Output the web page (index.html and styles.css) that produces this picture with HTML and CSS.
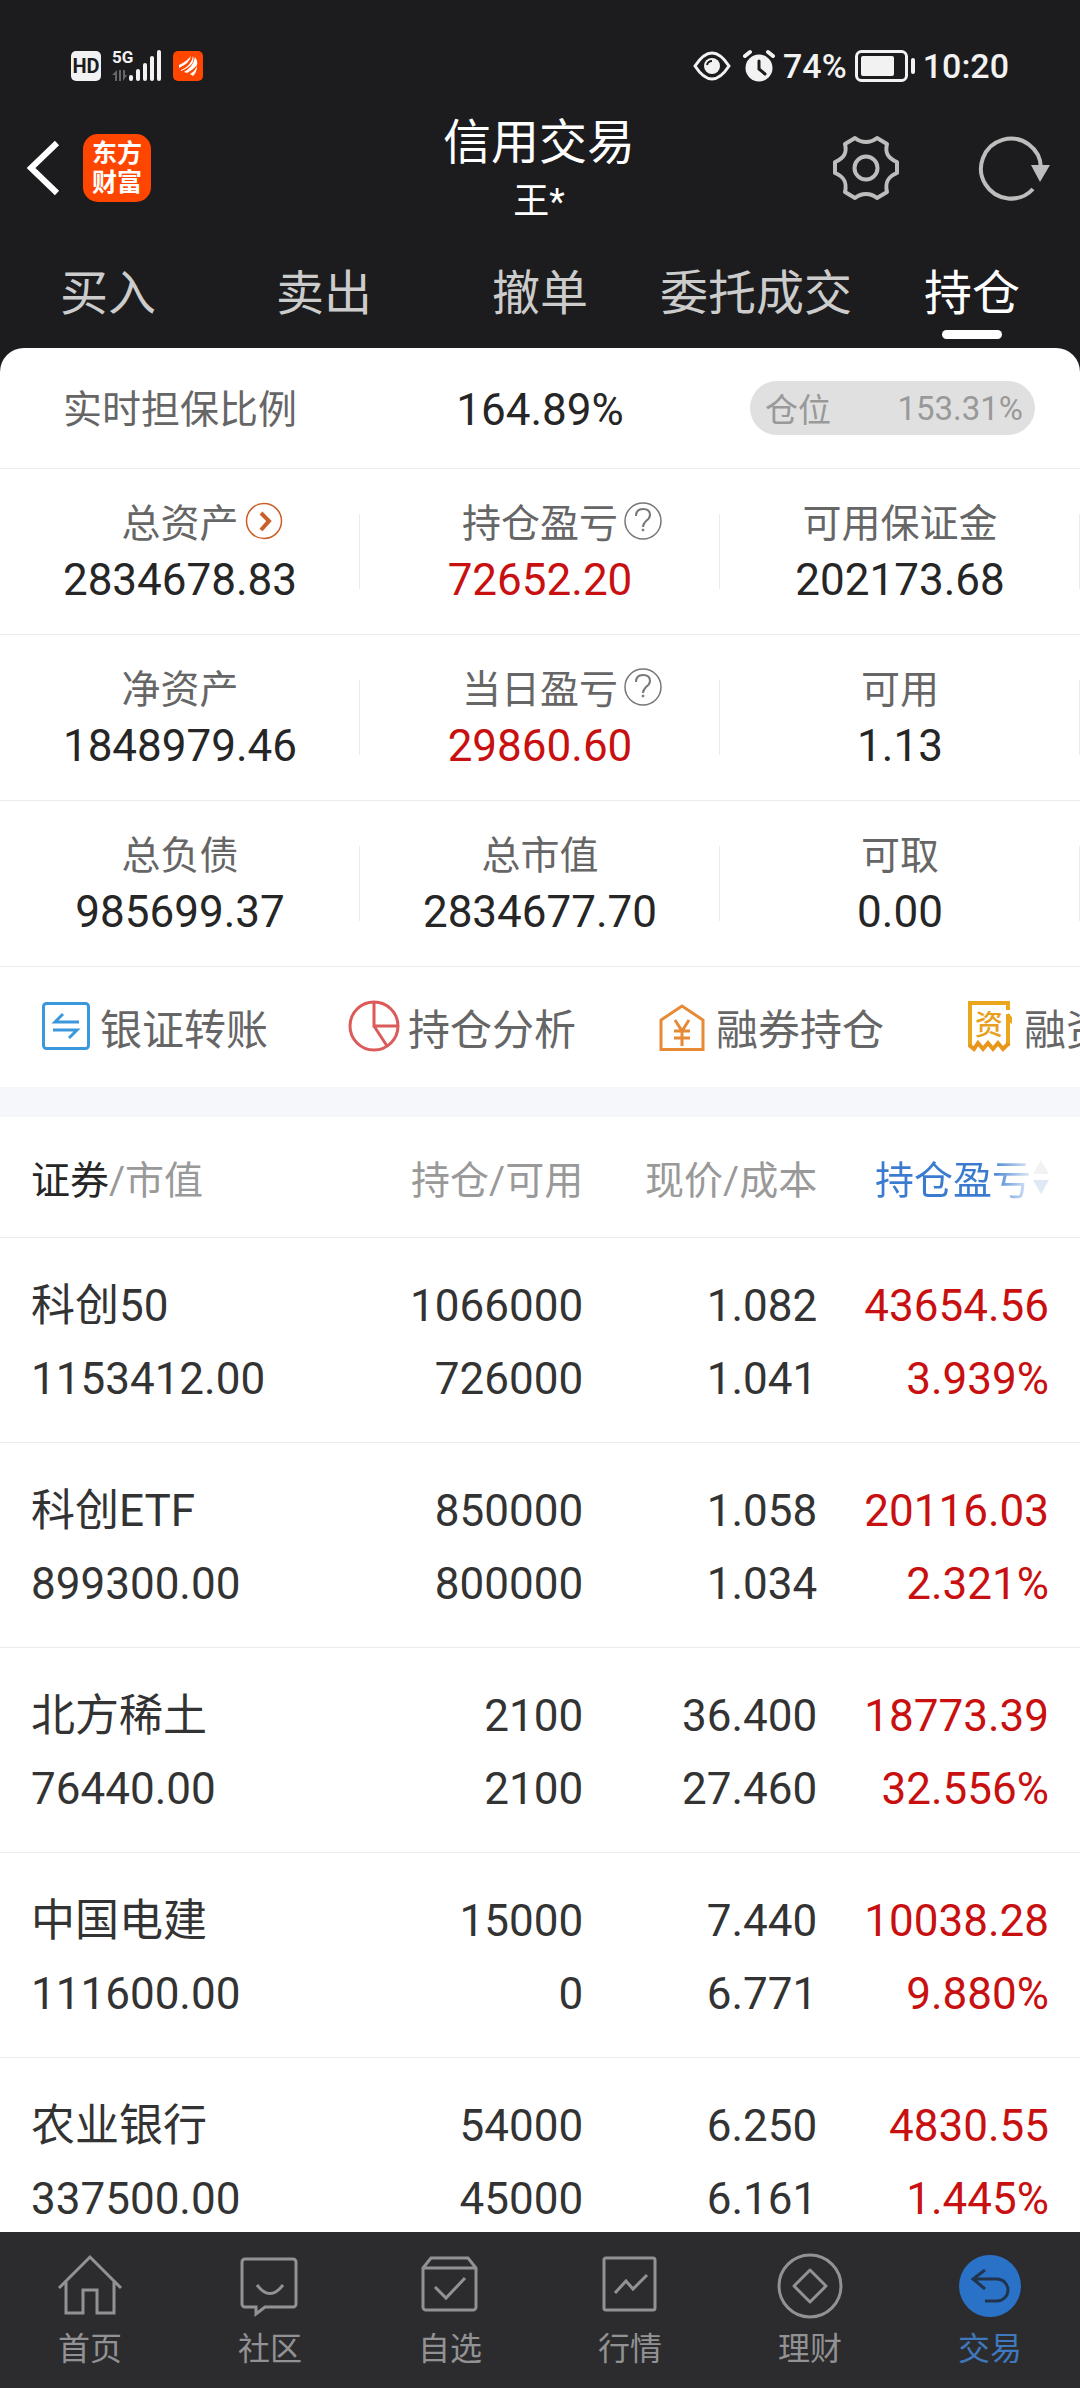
FILE: index.html
```html
<!DOCTYPE html>
<html lang="zh-CN">
<head>
<meta charset="utf-8">
<meta name="viewport" content="width=device-width, initial-scale=1">
<title>信用交易</title>
<link rel="stylesheet" href="styles.css">
</head>
<body>
<div class="app">
  <div class="status">
    <div class="status-group">
      <svg class="hd" width="30" height="30" viewBox="0 0 30 30"><rect width="30" height="30" rx="5" fill="#f2f2f2"/><text x="15" y="22" text-anchor="middle" font-size="20" font-weight="700" fill="#1c1c1e">HD</text></svg>
      <svg class="signal" width="50" height="32" viewBox="0 0 50 32"><text x="0" y="13" font-size="17" font-weight="700" fill="#f2f2f2">5G</text><g fill="#666"><path d="M0 25l5-5v11H3v-6zM7 20h2v11H7zM11 20v11l4-6h-2v-5z"/></g><g fill="#f2f2f2"><rect x="17" y="25" width="4" height="6" rx="2"/><rect x="24" y="19" width="4" height="12" rx="2"/><rect x="31" y="13" width="4" height="18" rx="2"/><rect x="38" y="6" width="4" height="25" rx="2"/><rect x="45" y="0" width="4" height="31" rx="2"/></g></svg>
      <svg width="30" height="30" viewBox="0 0 30 30"><rect width="30" height="30" rx="5" fill="#ff4600"/><path fill="#fff" d="M6 14Q13 11 18 5Q17 12 6 17zM8 19Q18 15 20 5Q23 14 8 20zM11 21Q20 16 22 6Q25 10 24 14Q21 18 14 22zM17 23Q22 20 24 15Q24 21 20 25z"/></svg>
    </div>
    <div class="status-group status-right">
      <svg width="38" height="30" viewBox="0 0 38 30"><path d="M2 15Q19-11 36 15Q19 41 2 15z" fill="none" stroke="#f2f2f2" stroke-width="3"/><circle cx="19" cy="15" r="8" fill="#f2f2f2"/><path d="M14 14q1-4 5-4" stroke="#1c1c1e" stroke-width="2" fill="none"/></svg>
      <svg class="alarm" width="32" height="32" viewBox="0 0 32 32"><circle cx="16" cy="18" r="13.500" fill="#f2f2f2"/><path d="M2 6l5-4M30 6l-5-4" stroke="#f2f2f2" stroke-width="4" stroke-linecap="round"/><path d="M16 11v8l6 5" fill="none" stroke="#1c1c1e" stroke-width="3" stroke-linecap="round"/></svg>
      <span>74%</span>
      <svg class="battery" width="60" height="32" viewBox="0 0 60 32"><rect x="1.500" y="1.500" width="50" height="29" rx="5" fill="none" stroke="#f2f2f2" stroke-width="3"/><rect x="6" y="6" width="33" height="20" rx="2" fill="#f2f2f2"/><rect x="56" y="8" width="4" height="16" rx="2" fill="#f2f2f2"/></svg>
      <span>10:20</span>
    </div>
  </div>

  <header class="header">
    <div class="header-side">
      <button class="icon-btn" aria-label="返回"><svg width="32" height="56" viewBox="0 0 32 56"><path d="M30 3L4 28L30 53" fill="none" stroke="#fff" stroke-width="6"/></svg></button>
      <div class="logo"><span>东方</span><span>财富</span></div>
    </div>
    <div class="heading"><h1>信用交易</h1><p>王*</p></div>
    <div class="header-side header-tools">
      <button class="icon-btn" aria-label="设置"><svg width="68" height="66" viewBox="0 0 68 66"><g fill="none" stroke="#bdbdbd" stroke-width="4" stroke-linejoin="round"><path d="M23 3Q28 7 34 7T45 3L55 9C53 17 55 23 65 27V38C55 42 53 48 55 57L45 63Q40 59 34 59T23 63L13 57C15 48 13 42 3 38V27C13 23 15 17 13 9z"/><circle cx="34" cy="33" r="11.500"/></g></svg></button>
      <button class="icon-btn" aria-label="刷新"><svg width="72" height="66" viewBox="0 0 72 66"><path d="M54 54A30 30 0 1 1 62 33" fill="none" stroke="#bdbdbd" stroke-width="4"/><path d="M52 30h19l-10 17z" fill="#bdbdbd"/></svg></button>
    </div>
  </header>

  <nav class="tabs">
    <a href="#buy">买入</a><a href="#sell">卖出</a><a href="#cancel">撤单</a><a href="#orders">委托成交</a><a href="#positions" class="active">持仓</a>
  </nav>

  <main class="panel">
    <section class="ratio">
      <span class="label">实时担保比例</span>
      <span class="value">164.89%</span>
      <div class="pill"><span>仓位</span><span>153.31%</span></div>
    </section>
    <section class="stats">
      <div class="stat"><span class="label">总资产<a class="hint" href="#assets" aria-label="总资产详情"><svg width="38" height="38" viewBox="0 0 38 38" fill="none" stroke="#c8602a"><circle cx="19" cy="19" r="17.500" stroke-width="1.500"/><path d="M16 11l8 8-8 9" stroke-width="4"/></svg></a></span><span class="value">2834678.83</span></div>
      <div class="stat"><span class="label">持仓盈亏<button class="hint" aria-label="持仓盈亏说明"><svg width="38" height="38" viewBox="0 0 38 38" fill="none" stroke="#777"><circle cx="19" cy="19" r="18" stroke-width="1.500"/><path d="M12 14q0-7 7-7t7 6q0 3-4 6q-3 3-3 6" stroke-width="2"/><circle cx="19" cy="28" r="1" fill="#777"/></svg></button></span><span class="value red">72652.20</span></div>
      <div class="stat"><span class="label">可用保证金</span><span class="value">202173.68</span></div>
      <div class="stat"><span class="label">净资产</span><span class="value">1848979.46</span></div>
      <div class="stat"><span class="label">当日盈亏<button class="hint" aria-label="当日盈亏说明"><svg width="38" height="38" viewBox="0 0 38 38" fill="none" stroke="#777"><circle cx="19" cy="19" r="18" stroke-width="1.500"/><path d="M12 14q0-7 7-7t7 6q0 3-4 6q-3 3-3 6" stroke-width="2"/><circle cx="19" cy="28" r="1" fill="#777"/></svg></button></span><span class="value red">29860.60</span></div>
      <div class="stat"><span class="label">可用</span><span class="value">1.13</span></div>
      <div class="stat"><span class="label">总负债</span><span class="value">985699.37</span></div>
      <div class="stat"><span class="label">总市值</span><span class="value">2834677.70</span></div>
      <div class="stat"><span class="label">可取</span><span class="value">0.00</span></div>
    </section>
    <nav class="shortcuts">
      <a href="#transfer"><svg width="52" height="52" viewBox="0 0 52 52" fill="none" stroke="#3b98dc" stroke-width="3"><rect x="3.500" y="3.500" width="45" height="45" rx="3"/><path d="M39 22H15l8-8M13 30h24l-8 8" stroke-width="3"/></svg>银证转账</a>
      <a href="#analysis"><svg width="52" height="52" viewBox="0 0 52 52" fill="none" stroke="#dc5a5a" stroke-width="3"><circle cx="26" cy="26" r="24"/><path d="M26 2v24h24M26 26l13 20"/></svg>持仓分析</a>
      <a href="#short"><svg width="52" height="52" viewBox="0 0 52 52" fill="none" stroke="#e68a35" stroke-width="3"><path d="M5 49.500V20L26 6l21 14v29.500z"/><path d="M19 20l7 11 7-11M26 31v15M18 31h16M18 38h16"/></svg>融券持仓</a>
      <a href="#margin"><svg width="52" height="52" viewBox="0 0 52 52"><path d="M6 46V3h38v7M44 14v32" fill="none" stroke="#eaa61d" stroke-width="4"/><path d="M44 13l4 4v7l-4-3z" fill="#eaa61d"/><path d="M5 45l5 4 4-6 5 6 5-6 5 6 5-6 5 6 6-6" fill="none" stroke="#e8961c" stroke-width="4"/><text x="25" y="35" text-anchor="middle" font-size="28" font-weight="500" fill="#e8a01c">资</text></svg>融资持仓</a>
    </nav>
    <table class="holdings">
      <thead><tr>
        <th><b>证券</b>/市值</th><th>持仓/可用</th><th>现价/成本</th>
        <th><button class="sort"><span>持仓盈亏</span><svg width="16" height="34" viewBox="0 0 16 34"><path d="M8 0l8 14H0z" fill="#f2f2f2"/><path d="M8 34L0 20h16z" fill="#dfe8f5"/></svg></button></th>
      </tr></thead>
      <tbody>
        <tr><td>科创50<br>1153412.00</td><td>1066000<br>726000</td><td>1.082<br>1.041</td><td>43654.56<br>3.939%</td></tr>
        <tr><td>科创ETF<br>899300.00</td><td>850000<br>800000</td><td>1.058<br>1.034</td><td>20116.03<br>2.321%</td></tr>
        <tr><td>北方稀土<br>76440.00</td><td>2100<br>2100</td><td>36.400<br>27.460</td><td>18773.39<br>32.556%</td></tr>
        <tr><td>中国电建<br>111600.00</td><td>15000<br>0</td><td>7.440<br>6.771</td><td>10038.28<br>9.880%</td></tr>
        <tr><td>农业银行<br>337500.00</td><td>54000<br>45000</td><td>6.250<br>6.161</td><td>4830.55<br>1.445%</td></tr>
      </tbody>
    </table>
  </main>

  <nav class="bottom">
    <a href="#home"><svg width="66" height="66" viewBox="0 0 66 66"><path d="M2 35L33 4l31 31M9 29v31h17V37h14v23h17V29"/></svg>首页</a>
    <a href="#community"><svg width="66" height="66" viewBox="0 0 66 66"><path d="M8 6h48a3 3 0 0 1 3 3v42a3 3 0 0 1-3 3H28l-9 7v-7H8a3 3 0 0 1-3-3V9a3 3 0 0 1 3-3zM20 32q13 17 26 0"/></svg>社区</a>
    <a href="#watch"><svg width="66" height="66" viewBox="0 0 66 66"><path d="M6 15l8-10h37l8 10v39a3 3 0 0 1-3 3H9a3 3 0 0 1-3-3zM6 15h53M18 34l11 11 19-20"/></svg>自选</a>
    <a href="#quotes"><svg width="66" height="66" viewBox="0 0 66 66"><rect x="7" y="5" width="51" height="52" rx="2"/><path d="M18 40l11-12 7 8 14-14"/></svg>行情</a>
    <a href="#wealth"><svg width="66" height="66" viewBox="0 0 66 66"><circle cx="33" cy="33" r="31"/><path d="M33 17l16 16-16 16-16-16z" stroke-linejoin="round"/></svg>理财</a>
    <a href="#trade" class="active"><svg width="66" height="66" viewBox="0 0 66 66"><circle class="disc" cx="33" cy="33" r="31"/><path class="arrow" d="M28 17L16 26l12 10M16 26h24a11 11 0 0 1 0 22H28"/></svg>交易</a>
  </nav>
</div>
</body>
</html>
```
FILE: styles.css
```css
* { box-sizing: border-box; }
body {
  margin: 0;
  background: #1c1c1e;
  color: #262626;
  font-family: Roboto, "Noto Sans CJK SC", sans-serif;
}
a { color: inherit; text-decoration: none; }
button { border: 0; padding: 0; background: none; font: inherit; color: inherit; }
svg { display: block; flex: none; overflow: visible; }
.app { display: flex; flex-direction: column; height: 100vh; }

.status {
  display: flex;
  justify-content: space-between;
  align-items: center;
  height: 108px;
  padding: 24px 71px 0;
  color: #f2f2f2;
  font-size: 34px;
  font-weight: 500;
}
.status-group { display: flex; align-items: center; gap: 11px; }
.status-right { gap: 8px; }
.alarm { margin-left: 4px; }

.header {
  display: grid;
  grid-template-columns: 1fr auto 1fr;
  align-items: center;
  height: 136px;
  padding: 0 29px 16px 27px;
  color: #fff;
}
.header-side { display: flex; align-items: center; gap: 24px; }
.header-tools { justify-content: flex-end; gap: 79px; }
.logo {
  display: flex;
  flex-direction: column;
  justify-content: center;
  width: 68px;
  height: 68px;
  border-radius: 15px;
  background: #ff4600;
  text-align: center;
  font-size: 25px;
  line-height: 29px;
  font-weight: 700;
}
.heading { padding-top: 2px; text-align: center; }
.heading h1 { margin: 0; font-size: 48px; line-height: 66px; font-weight: 400; }
.heading p { margin: 0; font-size: 36px; line-height: 52px; }

.tabs {
  display: grid;
  grid-template-columns: repeat(5, 1fr);
  height: 104px;
  color: #ccc;
  font-size: 48px;
  line-height: 100px;
  text-align: center;
}
.tabs a { display: flex; flex-direction: column; align-items: center; white-space: nowrap; }
.tabs .active { color: #fff; }
.tabs .active::after { content: ""; width: 60px; height: 9px; margin-top: -14px; border-radius: 5px; background: #fff; }

.panel {
  flex: 1;
  min-height: 0;
  overflow: hidden auto;
  scrollbar-width: none;
  border-radius: 24px 24px 0 0;
  background: #fff;
}
.label { position: relative; color: #666; font-size: 39px; line-height: 56px; }
.value { font-size: 44px; line-height: 56px; }
.red { color: #c81010; }
.ratio {
  display: grid;
  grid-template-columns: repeat(3, 1fr);
  align-items: center;
  justify-items: center;
  height: 121px;
  border-bottom: 1px solid #ebebeb;
}
.ratio > span { padding-top: 3px; }
.pill {
  display: flex;
  justify-content: space-between;
  align-items: center;
  width: 285px;
  height: 54px;
  margin-right: 15px;
  padding: 0 12px 0 15px;
  border-radius: 27px;
  background: #e0e0e0;
  color: #999;
  font-size: 33px;
}
.stats { display: grid; grid-template-columns: repeat(3, 1fr); }
.stat {
  display: flex;
  flex-direction: column;
  align-items: center;
  justify-content: center;
  height: 166px;
  border-bottom: 1px solid #ebebeb;
  background: linear-gradient(#ebebeb, #ebebeb) right center / 1px 75px no-repeat;
}
.hint { position: absolute; left: 100%; top: 6px; margin-left: 6px; }

.shortcuts {
  display: flex;
  gap: 80px;
  height: 120px;
  padding: 0 40px 2px;
  overflow: hidden;
  color: #666;
  font-size: 42px;
}
.shortcuts a { display: flex; align-items: center; gap: 8px; white-space: nowrap; }

.holdings {
  width: 100%;
  table-layout: fixed;
  border-collapse: separate;
  border-spacing: 0;
  border-top: 30px solid #f6f7fa;
  text-align: right;
}
.holdings th { height: 121px; padding: 0; border-bottom: 1px solid #ebebeb; color: #999; font-size: 39px; font-weight: 400; }
.holdings td { height: 205px; padding: 6px 0 0; border-bottom: 1px solid #ebebeb; color: #333; font-size: 44px; line-height: 73px; }
.holdings b { color: #262626; font-weight: 400; }
.holdings tr > :first-child { width: 32%; padding-left: 31px; text-align: left; }
.holdings tr > :nth-child(2) { width: 22%; }
.holdings tr > :nth-child(3) { width: 234px; }
.holdings tr > :last-child { padding-right: 31px; }
.holdings td:last-child { color: #c81010; }
.sort { display: inline-flex; align-items: center; gap: 2px; }
.sort span {
  background: linear-gradient(90deg, #3a7bd0 74%, #e4edf9);
  background-clip: text;
  color: transparent;
}

.bottom {
  display: grid;
  grid-template-columns: repeat(6, 1fr);
  height: 156px;
  background: #2c2c2e;
  color: #929294;
  font-size: 32px;
  line-height: 44px;
}
.bottom a { display: flex; flex-direction: column; align-items: center; padding-top: 21px; gap: 8px; }
.bottom svg { fill: none; stroke: #929294; stroke-width: 3; }
.bottom .active { color: #3f78bd; }
.bottom .disc { fill: #2a72c8; stroke: none; }
.bottom .arrow { stroke: #22344c; }
```
